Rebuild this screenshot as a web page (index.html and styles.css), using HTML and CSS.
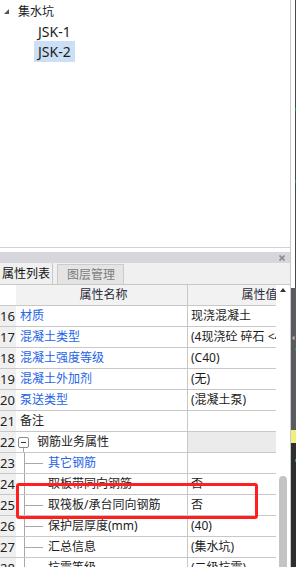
FILE: index.html
```html
<!DOCTYPE html>
<html lang="zh-CN">
<head>
  <meta charset="UTF-8" />
  <meta name="viewport" content="width=device-width, initial-scale=1.0"/>
  <title>集水坑 属性列表</title>
  <link rel="stylesheet" href="styles.css">
</head>
<body>
  <div class="screen">
    <div class="main">
      <div class="tree">
        <div class="node root">
          <svg class="caret" width="5" height="5" viewBox="0 0 5 5"><polygon points="5,0 5,5 0,5" fill="#555"/></svg>
          <span>集水坑</span>
        </div>
        <div class="node leaf"><span class="label">JSK-1</span></div>
        <div class="node leaf"><span class="label selected">JSK-2</span></div>
      </div>

      <div class="panel">
        <div class="titlebar">
          <svg class="close" width="6" height="6" viewBox="0 0 6 6"><path d="M0.5 0.5 L5.5 5.5 M5.5 0.5 L0.5 5.5" stroke="#8c8c8c" stroke-width="1.6"/></svg>
        </div>
        <div class="tabs">
          <div class="tab active">属性列表</div>
          <div class="tab">图层管理</div>
        </div>

        <div class="table-wrap">
          <div class="grid">
            <div class="hd num"></div><div class="hd name">属性名称</div><div class="hd val">属性值</div>

            <div class="num">16</div><div class="name link">材质</div><div class="val">现浇混凝土</div>
            <div class="num">17</div><div class="name link">混凝土类型</div><div class="val">(4现浇砼 碎石 &lt;40mm)</div>
            <div class="num">18</div><div class="name link">混凝土强度等级</div><div class="val">(C40)</div>
            <div class="num">19</div><div class="name link">混凝土外加剂</div><div class="val">(无)</div>
            <div class="num">20</div><div class="name link">泵送类型</div><div class="val">(混凝土泵)</div>
            <div class="num">21</div><div class="name">备注</div><div class="val"></div>
            <div class="num">22</div><div class="name group"><span class="toggle"></span>钢筋业务属性</div><div class="val shaded"></div>
            <div class="num">23</div><div class="name child link"><span class="branch"></span>其它钢筋</div><div class="val"></div>
            <div class="num">24</div><div class="name child"><span class="branch"></span>取板带同向钢筋</div><div class="val">否</div>
            <div class="num">25</div><div class="name child"><span class="branch"></span>取筏板/承台同向钢筋</div><div class="val">否</div>
            <div class="num">26</div><div class="name child"><span class="branch"></span>保护层厚度(mm)</div><div class="val">(40)</div>
            <div class="num">27</div><div class="name child"><span class="branch"></span>汇总信息</div><div class="val">(集水坑)</div>
            <div class="num">28</div><div class="name child"><span class="branch"></span>抗震等级</div><div class="val">(二级抗震)</div>
          </div>

          <div class="scrollbar">
            <div class="up"></div>
            <div class="thumb"></div>
          </div>

          <div class="callout"></div>
        </div>
      </div>
    </div>

    <div class="edge">
      <div class="edge-top"></div>
      <div class="edge-bottom">
        <svg width="5" height="6" viewBox="0 0 5 6"><polygon points="3.5,0.5 3.5,5.5 1,3" fill="#b8b8b8"/></svg>
      </div>
    </div>
  </div>
</body>
</html>
```

FILE: styles.css
```css
html, body {
  margin: 0;
}

body {
  width: 296px;
  height: 567px;
  overflow: hidden;
  background: #fff;
  font-family: "Noto Sans", "Noto Sans CJK SC", sans-serif;
  font-size: 12px;
  color: #1c1c1c;
}

.screen {
  display: flex;
  height: 567px;
}

.main {
  width: 290px;
  border-right: 1px solid #c9c9cc;
  display: flex;
  flex-direction: column;
}

/* tree of components */
.tree {
  height: 246px;
  padding-top: 1px;
  border-bottom: 1px solid #d2d2d2;
}

.node {
  height: 20px;
  display: flex;
  align-items: center;
}

.caret {
  margin-left: 4px;
  margin-right: 9px;
}

.leaf {
  padding-left: 34px;
}

.leaf .label {
  font-size: 14px;
  height: 21px;
  line-height: 21px;
  padding: 0 4px;
}

.leaf .selected {
  background: #cbdff5;
}

/* property panel */
.panel {
  flex: 1;
  min-height: 0;
  margin-top: 4px;
  display: flex;
  flex-direction: column;
}

.titlebar {
  height: 11px;
  background: #d6d6dc;
  display: flex;
  align-items: center;
  justify-content: flex-end;
  padding-right: 5px;
}

.tabs {
  height: 21px;
  background: #f0f0f0;
  border-bottom: 1px solid #c8c8c8;
  display: flex;
  align-items: flex-end;
}

.tab {
  height: 19px;
  line-height: 19px;
  margin-left: 4px;
  padding: 0 8px 0 9px;
  background: #e4e4e4;
  border: 1px solid #cbcbcb;
  border-bottom: none;
  color: #7c7c7c;
}

.tab.active {
  height: 21px;
  line-height: 21px;
  margin-left: -6px;
  padding: 0 2px 0 8px;
  background: #f0f0f0;
  border: none;
  border-right: 1px solid #c8c8c8;
  color: #111;
}

.table-wrap {
  flex: 1;
  position: relative;
  overflow: hidden;
}

.grid {
  display: grid;
  grid-template-columns: 16px 172px 140px;
  width: 328px;
}

.grid > div {
  box-sizing: border-box;
  height: 21px;
  line-height: 20px;
  border-bottom: 1px solid #c8c8c8;
  white-space: nowrap;
  overflow: hidden;
}

.hd {
  background: #f2f2f2;
  color: #2a2a3a;
}

.hd.num {
  background: #fff;
}

.hd.name, .hd.val {
  text-align: center;
}

.num {
  background: #f0f0f0;
  text-align: right;
  padding-right: 4px;
  font-size: 13px;
  color: #222;
}

.name {
  display: flex;
  align-items: center;
  padding-left: 4px;
  border-right: 1px solid #c8c8c8;
}

.hd.name {
  display: block;
}

.link {
  color: #2463e6;
}

.val {
  padding-left: 3px;
}

.val.shaded {
  background: #ebebeb;
}

.group {
  padding-left: 2px;
}

.toggle {
  position: relative;
  box-sizing: border-box;
  width: 11px;
  height: 11px;
  margin-right: 8px;
  border: 1px solid #8a8a8a;
  border-radius: 2px;
  background: linear-gradient(#333, #333) center / 5px 1px no-repeat, #fff;
}

.toggle::after {
  content: "";
  position: absolute;
  left: 4px;
  top: 10px;
  width: 1px;
  height: 5px;
  background: #a8a8a8;
}

.child {
  padding-left: 8px;
}

.branch {
  align-self: stretch;
  width: 18px;
  margin-right: 5px;
  border-left: 1px solid #a8a8a8;
  background: linear-gradient(#a8a8a8, #a8a8a8) 0 50% / 100% 1px no-repeat;
}

.scrollbar {
  position: absolute;
  top: 0;
  bottom: 0;
  left: 276px;
  width: 14px;
  background: #fff;
  display: flex;
  flex-direction: column;
  align-items: center;
}

.up {
  margin-top: 3px;
  width: 0;
  height: 0;
  border-left: 3.5px solid transparent;
  border-right: 3.5px solid transparent;
  border-bottom: 4px solid #333;
}

.thumb {
  flex: 1;
  width: 8px;
  margin-top: 184px;
  background: #c4c4c4;
  border-radius: 4px 4px 0 0;
}

/* red annotation box */
.callout {
  position: absolute;
  left: 16px;
  top: 198px;
  width: 236px;
  height: 30px;
  border: 3px solid #ff1f1f;
  border-radius: 3px;
}

/* dark strip on the right */
.edge {
  width: 5px;
  display: flex;
  flex-direction: column;
}

.edge-top {
  height: 288px;
  background:
    linear-gradient(#1f9a1f, #1f9a1f) right 0 top 108px / 1px 3px no-repeat,
    linear-gradient(#1f9a1f, #1f9a1f) right 0 top 180px / 1px 3px no-repeat,
    linear-gradient(#4a4a4a, #4a4a4a) right 0 top 0 / 1px 100% no-repeat,
    #fff;
}

.edge-bottom {
  flex: 1;
  padding-top: 47px;
  background:
    linear-gradient(#f1ee7c, #f1ee7c) 0 142px / 100% 13px no-repeat,
    linear-gradient(#2aa02a, #2aa02a) right 0 top 60px / 1px 3px no-repeat,
    linear-gradient(#2aa02a, #2aa02a) right 0 top 171px / 1px 3px no-repeat,
    linear-gradient(#5b5b5f 0 142px, #2e2e2e 142px);
}

.edge-bottom svg {
  display: block;
}
```
